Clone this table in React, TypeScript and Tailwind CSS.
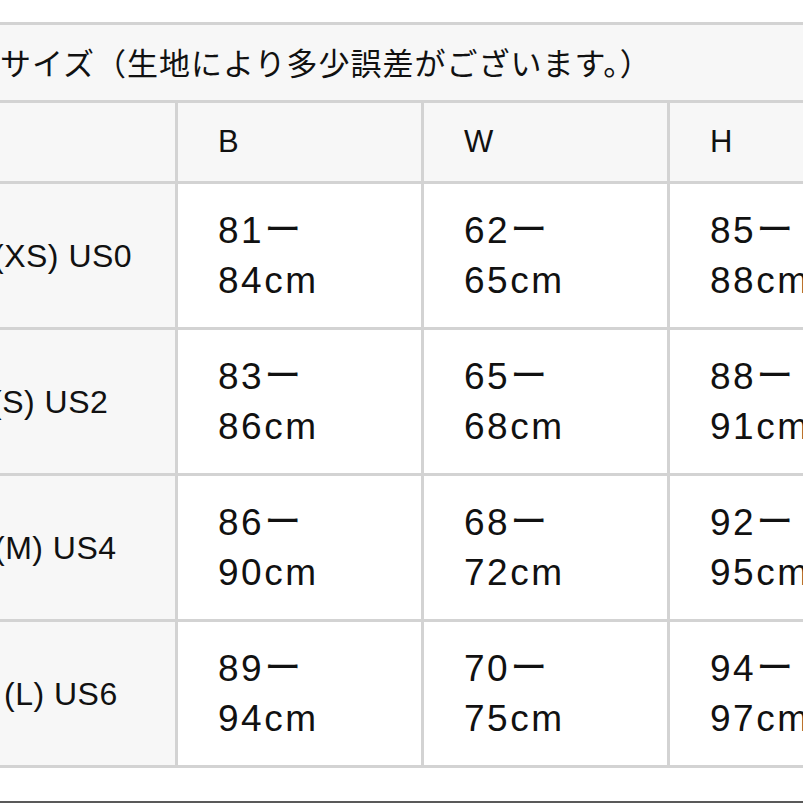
// App.tsx - サイズ表（スクリーンショット再現）
const sizes = [
  { label: '(XS) US0', shift: 'ml-[-7px]', b: ['81', '84'], w: ['62', '65'], h: ['85', '88'] },
  { label: '(S) US2', shift: 'ml-[-9px]', b: ['83', '86'], w: ['65', '68'], h: ['88', '91'] },
  { label: '(M) US4', shift: 'ml-[-6px]', b: ['86', '90'], w: ['68', '72'], h: ['92', '95'] },
  { label: '(L) US6', shift: 'ml-[4px]', b: ['89', '94'], w: ['70', '75'], h: ['94', '97'] },
];

const latin = "font-['Liberation_Sans','Noto_Sans_CJK_JP',sans-serif]";

const RangeCell = ({ range }: { range: string[] }) => (
  <div className={`bg-white flex items-center pl-10 text-[37px] leading-[50px] tracking-[2.5px] text-[#111] whitespace-nowrap overflow-hidden ${latin}`}>
    <div className="flex flex-col">
      <span>{range[0]}ー</span>
      <span>{range[1]}cm</span>
    </div>
  </div>
);

const App = () => {
  return (
    <div className="h-[803px] w-[803px] overflow-hidden bg-white flex flex-col pt-[22px]">
      <div className="w-[900px] grid grid-cols-[175px_243px_243px_1fr] grid-rows-[75px_78px_143px_143px_143px_143px] gap-[3px] bg-[#d3d3d3] border-y-[3px] border-[#d3d3d3]">
        <div className="col-span-4 bg-[#f7f7f7] flex items-center text-[31px] tracking-[1px] text-[#111] whitespace-nowrap font-['Noto_Sans_CJK_JP',sans-serif]">
          サイズ（生地により多少誤差がございます。）
        </div>

        <div className="bg-[#f7f7f7]" />
        {['B', 'W', 'H'].map((k) => (
          <div key={k} className={`bg-[#f7f7f7] flex items-center pl-10 text-[31px] text-[#111] ${latin}`}>
            {k}
          </div>
        ))}

        {sizes.map((s) => (
          <div key={s.label} className="contents">
            <div className={`bg-[#f7f7f7] flex items-center overflow-hidden whitespace-nowrap text-[32px] tracking-[0.5px] text-[#111] ${latin}`}>
              <span className={s.shift}>{s.label}</span>
            </div>
            <RangeCell range={s.b} />
            <RangeCell range={s.w} />
            <RangeCell range={s.h} />
          </div>
        ))}
      </div>
      <div className="flex-1" />
      <div className="h-[2px] bg-[#595959]" />
    </div>
  );
};

export default App;
